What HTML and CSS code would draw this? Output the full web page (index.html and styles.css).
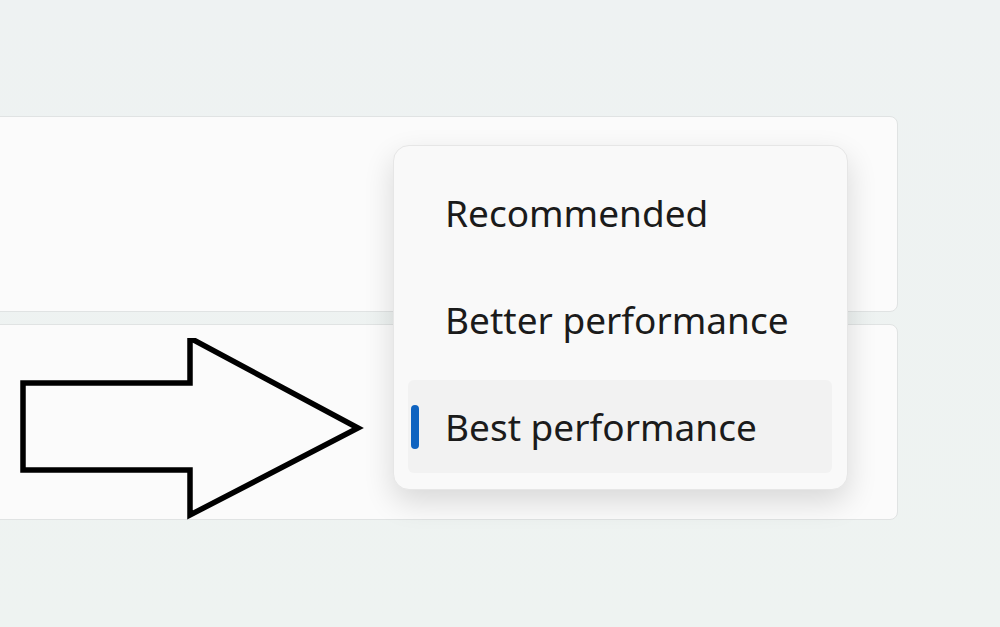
FILE: index.html
```html
<!DOCTYPE html>
<html lang="en">
<head>
  <meta charset="UTF-8">
  <title>Graphics preference</title>
  <link rel="stylesheet" href="styles.css">
</head>
<body>
  <div class="settings">
    <div class="card"></div>
    <div class="card"></div>
  </div>

  <!-- annotation arrow drawn over the second card -->
  <svg class="pointer" width="370" height="190" viewBox="0 0 370 190">
    <polygon points="23,45 190,45 190,0 358,90 190,177 190,132 23,132" />
  </svg>

  <div class="menu">
    <div class="menu-item">Recommended</div>
    <div class="menu-item">Better performance</div>
    <div class="menu-item selected">Best performance</div>
  </div>
</body>
</html>
```

FILE: styles.css
```css
body {
  margin: 0;
  font-family: 'Noto Sans', 'Open Sans', sans-serif;
  background: linear-gradient(to bottom, #eef2f2, #eef3f1);
  color: #1b1b1b;
  height: 627px;
  overflow: hidden;
  position: relative;
}

.settings {
  padding-top: 116px;
  margin-left: -12px;
  width: 910px;
  display: flex;
  flex-direction: column;
  gap: 12px;
}

.card {
  height: 194px;
  background: #fbfbfb;
  border: 1px solid #e0e3e3;
  border-radius: 8px;
}

.pointer {
  position: absolute;
  left: 0;
  top: 338px;
}

.pointer polygon {
  fill: none;
  stroke: #000;
  stroke-width: 5.5;
  stroke-linejoin: miter;
}

.menu {
  position: absolute;
  left: 393px;
  top: 145px;
  width: 455px;
  height: 345px;
  box-sizing: border-box;
  padding: 20px 15px 0 14px;
  background: #f9f9f9;
  border: 1px solid #e6e6e6;
  border-radius: 16px;
  box-shadow: 0 12px 30px rgba(0,0,0,0.14);
  display: flex;
  flex-direction: column;
  gap: 14px;
}

.menu-item {
  height: 93px;
  display: flex;
  align-items: center;
  padding-left: 37px;
  font-size: 37px;
  border-radius: 6px;
  position: relative;
}

.menu-item.selected {
  background: #f2f2f2;
}

.menu-item.selected::before {
  content: "";
  position: absolute;
  left: 3px;
  top: 25px;
  width: 8px;
  height: 44px;
  border-radius: 4px;
  background: #0f63c0;
}
```
